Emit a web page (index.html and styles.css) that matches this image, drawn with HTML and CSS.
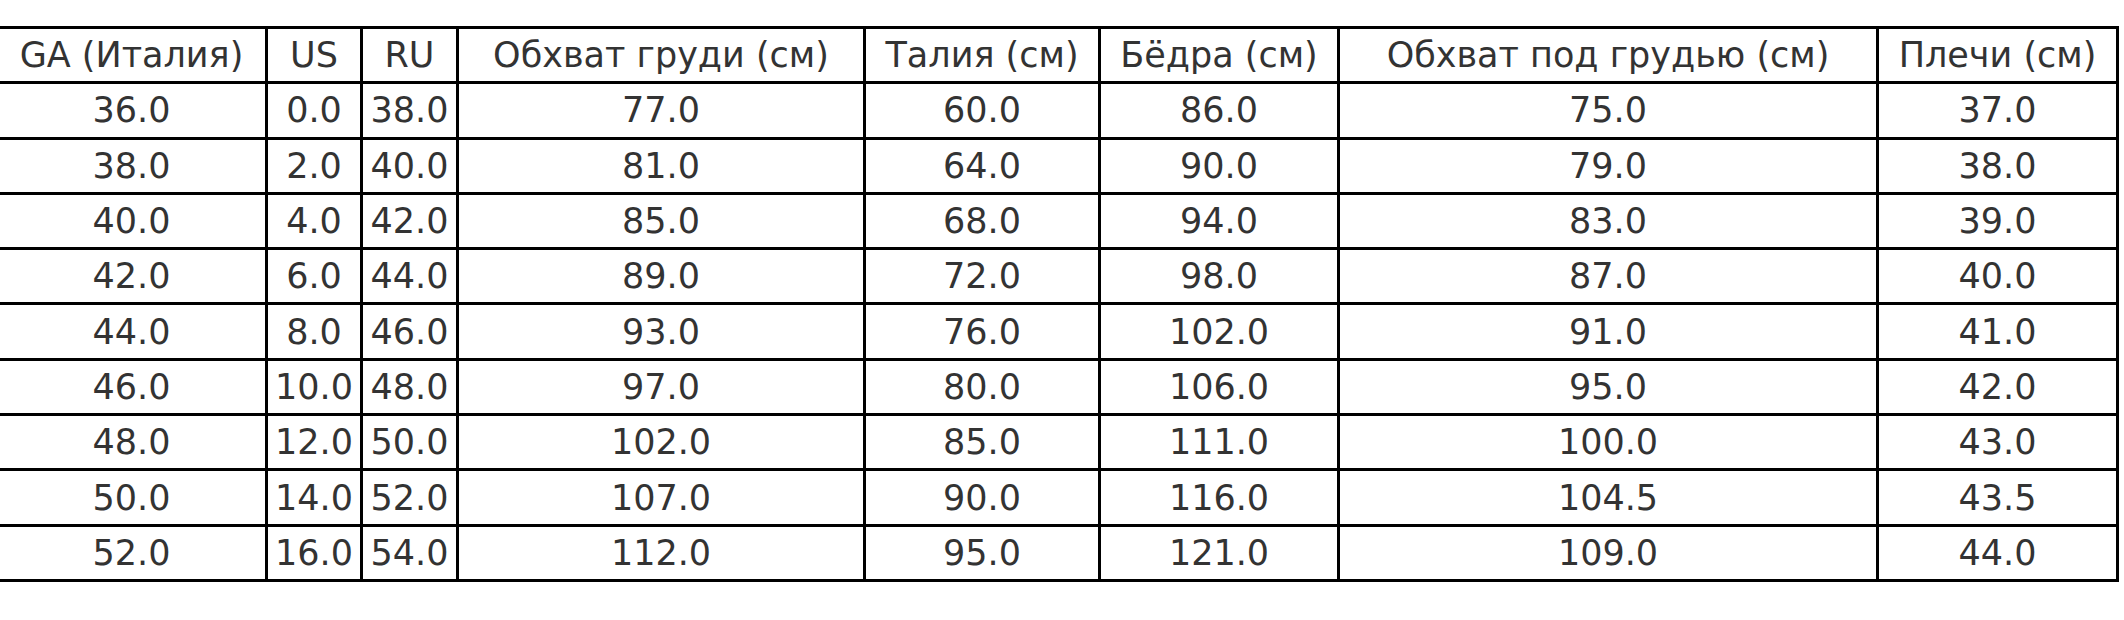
FILE: index.html
```html
<!DOCTYPE html>
<html lang="ru">
<head>
<meta charset="utf-8">
<title>Таблица размеров</title>
<link rel="stylesheet" href="styles.css">
</head>
<body>
<table class="sizes">
  <colgroup>
    <col class="c-ga">
    <col class="c-us">
    <col class="c-ru">
    <col class="c-chest">
    <col class="c-waist">
    <col class="c-hips">
    <col class="c-under">
    <col class="c-shoulders">
  </colgroup>
  <thead>
    <tr>
      <th>GA (Италия)</th>
      <th>US</th>
      <th>RU</th>
      <th>Обхват груди (см)</th>
      <th>Талия (см)</th>
      <th>Бёдра (см)</th>
      <th>Обхват под грудью (см)</th>
      <th>Плечи (см)</th>
    </tr>
  </thead>
  <tbody>
    <tr><td>36.0</td><td>0.0</td><td>38.0</td><td>77.0</td><td>60.0</td><td>86.0</td><td>75.0</td><td>37.0</td></tr>
    <tr><td>38.0</td><td>2.0</td><td>40.0</td><td>81.0</td><td>64.0</td><td>90.0</td><td>79.0</td><td>38.0</td></tr>
    <tr><td>40.0</td><td>4.0</td><td>42.0</td><td>85.0</td><td>68.0</td><td>94.0</td><td>83.0</td><td>39.0</td></tr>
    <tr><td>42.0</td><td>6.0</td><td>44.0</td><td>89.0</td><td>72.0</td><td>98.0</td><td>87.0</td><td>40.0</td></tr>
    <tr><td>44.0</td><td>8.0</td><td>46.0</td><td>93.0</td><td>76.0</td><td>102.0</td><td>91.0</td><td>41.0</td></tr>
    <tr><td>46.0</td><td>10.0</td><td>48.0</td><td>97.0</td><td>80.0</td><td>106.0</td><td>95.0</td><td>42.0</td></tr>
    <tr><td>48.0</td><td>12.0</td><td>50.0</td><td>102.0</td><td>85.0</td><td>111.0</td><td>100.0</td><td>43.0</td></tr>
    <tr><td>50.0</td><td>14.0</td><td>52.0</td><td>107.0</td><td>90.0</td><td>116.0</td><td>104.5</td><td>43.5</td></tr>
    <tr><td>52.0</td><td>16.0</td><td>54.0</td><td>112.0</td><td>95.0</td><td>121.0</td><td>109.0</td><td>44.0</td></tr>
  </tbody>
</table>
</body>
</html>
```
FILE: styles.css
```css
html, body {
  margin: 0;
  padding: 0;
  background: #ffffff;
}

.sizes {
  border-collapse: collapse;
  table-layout: fixed;
  width: 2122px;
  margin: 26px 0 0 -5px;
  font-family: "DejaVu Sans", "Noto Sans", sans-serif;
  font-size: 35px;
  color: #333333;
}

.sizes th,
.sizes td {
  border: 3px solid #000000;
  padding: 0;
  height: 52.3px;
  text-align: center;
  vertical-align: middle;
  font-weight: normal;
  white-space: nowrap;
  line-height: 40px;
}

.c-ga { width: 270px; }
.c-us { width: 95px; }
.c-ru { width: 96px; }
.c-chest { width: 407px; }
.c-waist { width: 235px; }
.c-hips { width: 239px; }
.c-under { width: 539px; }
.c-shoulders { width: 240px; }
```
